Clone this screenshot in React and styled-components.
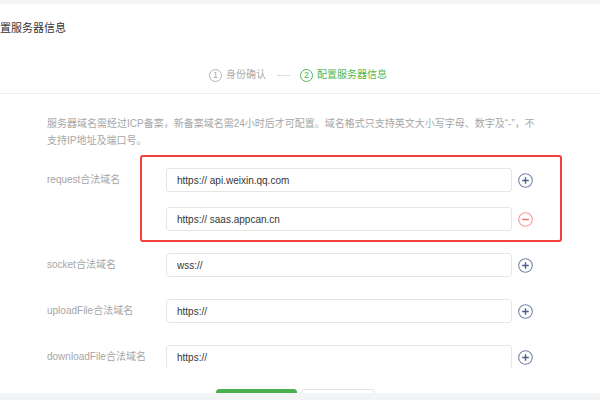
import React from 'react';
import styled, { createGlobalStyle } from 'styled-components';

const GlobalStyle = createGlobalStyle`
    html, body {
        margin: 0;
        padding: 0;
        background: #f3f4f6;
    }
    body {
        font-family: "Liberation Sans", "Noto Sans CJK SC", sans-serif;
        color: #353535;
    }
`

const Page = styled.div`
    width: 600px;
    height: 400px;
    padding-top: 4px;
    box-sizing: border-box;
    overflow: hidden;
`

const Card = styled.div`
    height: 389px;
    background: #fff;
    overflow: hidden;
    display: flex;
    flex-direction: column;

    & > * {
        flex-shrink: 0;
    }
`

const Header = styled.div`
    padding-top: 16px;
    border-bottom: 1px solid #ececec;
`

const Title = styled.h2`
    margin: 0;
    font-size: 11px;
    font-weight: normal;
    line-height: 16px;
    color: #353535;
`

const Steps = styled.div`
    display: flex;
    align-items: center;
    height: 14px;
    margin-top: 32px;
    margin-bottom: 11px;
    padding-left: 209px;
`

const Step = styled.div`
    display: flex;
    align-items: center;
    gap: 4px;
    font-size: 10px;
    line-height: 14px;
    color: ${(props) => (props.$active ? '#52b752' : '#aaaaaa')};
`

const StepNum = styled.span`
    width: 11px;
    height: 11px;
    border-radius: 50%;
    border: 1px solid ${(props) => (props.$active ? '#52b752' : '#b5b5b5')};
    display: flex;
    align-items: center;
    justify-content: center;
    font-size: 9px;
    line-height: 1;
`

const StepLine = styled.span`
    width: 13px;
    height: 1px;
    background: #dddddd;
    margin: 0 10px 0 11px;
`

const Body = styled.div`
    height: 274px;
    overflow: hidden;
    padding-left: 47px;
`

const Desc = styled.p`
    margin: 0;
    padding-top: 21px;
    font-size: 10px;
    line-height: 17px;
    color: #a6a6a6;
`

const Form = styled.div`
    margin-top: 6px;
    display: flex;
    flex-direction: column;
`

const Row = styled.div`
    display: flex;
    align-items: flex-start;
`

const Label = styled.div`
    width: 93px;
    flex-shrink: 0;
    padding-top: ${(props) => (props.$highlight ? '13px' : '11px')};
    font-size: 10px;
    line-height: 24px;
    color: #a6a6a6;
    white-space: nowrap;
`

const FieldCol = styled.div`
    display: flex;
    flex-direction: column;
    gap: 15px;
    border: ${(props) => (props.$highlight ? '2px solid #f2403c' : '0')};
    border-radius: 3px;
    padding: ${(props) => (props.$highlight ? '11px 27px 9px 24px' : '11px 29px 11px 26px')};
`

const FieldLine = styled.div`
    display: flex;
    align-items: center;
    gap: 6px;
`

const Input = styled.input`
    width: 346px;
    height: 24px;
    box-sizing: border-box;
    border: 1px solid #e6e6e6;
    border-radius: 3px;
    padding: 0 10px;
    font-family: "Liberation Sans", "Noto Sans CJK SC", sans-serif;
    font-size: 10px;
    color: #353535;
    outline: none;
    background: #fff;
`

const IconButton = styled.span`
    width: 15px;
    height: 15px;
    display: flex;
    cursor: pointer;
`

const Actions = styled.div`
    display: flex;
    gap: 4px;
    padding-top: 21px;
    padding-left: 216px;
`

const Button = styled.button`
    width: ${(props) => props.$width};
    height: 28px;
    border-radius: 3px;
    border: 1px solid ${(props) => (props.$primary ? '#4bb04e' : '#e3e3e3')};
    background: ${(props) => (props.$primary ? '#4bb04e' : '#fff')};
`

const AddIcon = () => (
    <IconButton>
        <svg width="15" height="15" viewBox="0 0 15 15">
            <circle cx="7.5" cy="7.5" r="6.8" fill="none" stroke="#7886ab" strokeWidth="1.1" />
            <path d="M7.5 4.2v6.6M4.2 7.5h6.6" stroke="#4f5e88" strokeWidth="1.4" />
        </svg>
    </IconButton>
)

const RemoveIcon = () => (
    <IconButton>
        <svg width="15" height="15" viewBox="0 0 15 15">
            <circle cx="7.5" cy="7.5" r="6.8" fill="none" stroke="#f59a9a" strokeWidth="1.1" />
            <path d="M4.2 7.5h6.6" stroke="#ef6a6a" strokeWidth="1.4" />
        </svg>
    </IconButton>
)

const domains = [
    { label: 'request合法域名', highlight: true, values: ['https:// api.weixin.qq.com', 'https:// saas.appcan.cn'] },
    { label: 'socket合法域名', values: ['wss://'] },
    { label: 'uploadFile合法域名', values: ['https://'] },
    { label: 'downloadFile合法域名', values: ['https://'] },
]

export default function App() {
    return (
        <>
            <GlobalStyle />
            <Page>
                <Card>
                    <Header>
                        <Title>置服务器信息</Title>
                        <Steps>
                            <Step>
                                <StepNum>1</StepNum>
                                身份确认
                            </Step>
                            <StepLine />
                            <Step $active>
                                <StepNum $active>2</StepNum>
                                配置服务器信息
                            </Step>
                        </Steps>
                    </Header>
                    <Body>
                        <Desc>
                            服务器域名需经过ICP备案，新备案域名需24小时后才可配置。域名格式只支持英文大小写字母、数字及“-”，不
                            <br />
                            支持IP地址及端口号。
                        </Desc>
                        <Form>
                            {domains.map((d) => (
                                <Row key={d.label}>
                                    <Label $highlight={d.highlight}>{d.label}</Label>
                                    <FieldCol $highlight={d.highlight}>
                                        {d.values.map((v, i) => (
                                            <FieldLine key={v + i}>
                                                <Input readOnly defaultValue={v} />
                                                {i === 0 ? <AddIcon /> : <RemoveIcon />}
                                            </FieldLine>
                                        ))}
                                    </FieldCol>
                                </Row>
                            ))}
                        </Form>
                    </Body>
                    <Actions>
                        <Button $primary $width="81px" aria-label="保存并提交" />
                        <Button $width="74px" aria-label="上一步" />
                    </Actions>
                </Card>
            </Page>
        </>
    );
}
